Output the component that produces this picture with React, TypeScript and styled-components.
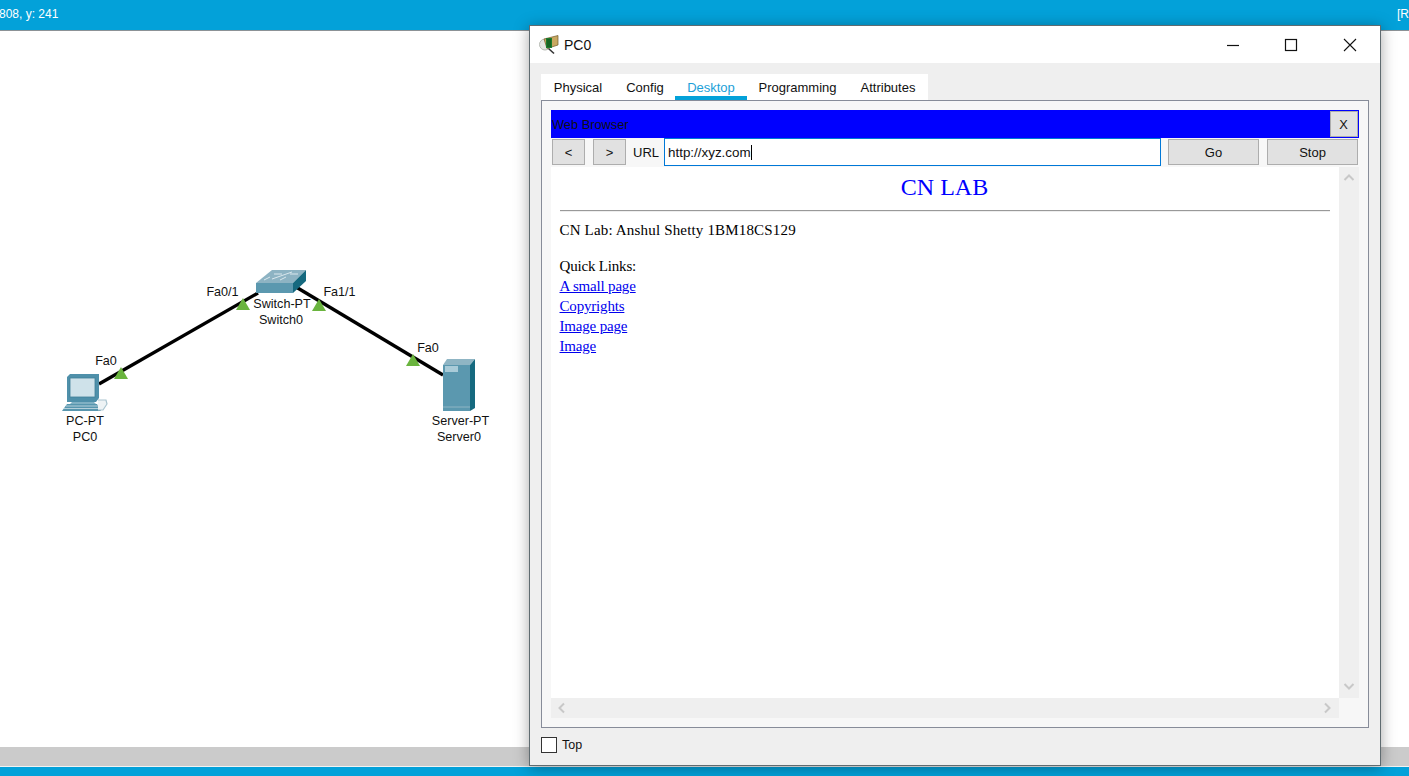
import React from "react";
import styled, { createGlobalStyle } from "styled-components";

const Global = createGlobalStyle`
  html, body { margin: 0; padding: 0; height: 100%; overflow: hidden; background: #fff; }
  #root { height: 100%; }
`;

const Page = styled.div`
  position: relative;
  width: 1409px;
  height: 776px;
  display: flex;
  flex-direction: column;
  overflow: hidden;
  font-family: "Liberation Sans", Arial, sans-serif;
  font-size: 12px;
  color: #111;
`;

const TopBar = styled.div`
  height: 30px;
  flex: none;
  display: flex;
  justify-content: space-between;
  align-items: flex-start;
  padding-top: 7px;
  box-sizing: border-box;
  background: #03a1d9;
  color: #fff;
  font-size: 12px;
  line-height: 14px;
  white-space: nowrap;
`;

const TopCoords = styled.span`
  margin-left: -1px;
`;

const TopRule = styled.div`
  height: 1px;
  flex: none;
  background: #8c9296;
`;

const Canvas = styled.div`
  position: relative;
  flex: 1;
  background: #fff;
`;

const Wires = styled.svg`
  position: absolute;
  left: 0;
  top: -31px;
  width: 520px;
  height: 500px;
`;

const NodeLabel = styled.span<{ $x: number; $y: number }>`
  position: absolute;
  left: ${(p) => p.$x}px;
  top: ${(p) => p.$y - 31}px;
  transform: translateX(-50%);
  line-height: 16px;
  font-size: 12.6px;
  white-space: nowrap;
  color: #111;
`;

const BottomScroll = styled.div`
  height: 19px;
  flex: none;
  background: #cbcbcb;
`;

const BottomRule = styled.div`
  height: 1px;
  flex: none;
  background: #f2f2f2;
`;

const BottomBar = styled.div`
  height: 9px;
  flex: none;
  background: #03a1d9;
`;

const Win = styled.div`
  position: absolute;
  left: 529px;
  top: 25px;
  width: 852px;
  height: 741px;
  box-sizing: border-box;
  border: 1px solid #5f6b70;
  background: #efefef;
  display: flex;
  flex-direction: column;
  box-shadow: 0 2px 14px rgba(0, 0, 0, 0.35);
`;

const TitleBar = styled.div`
  height: 37px;
  flex: none;
  background: #fff;
  display: flex;
  align-items: center;
  padding: 0 1px 0 9px;
  font-size: 14px;
  color: #111;
`;

const TitleText = styled.span`
  margin-left: 4px;
  flex: 1;
`;

const WinControl = styled.div`
  width: 58.5px;
  height: 37px;
  display: flex;
  align-items: center;
  justify-content: center;
`;

const Body = styled.div`
  flex: 1;
  display: flex;
  flex-direction: column;
  padding: 11px 11px 0 11px;
  min-height: 0;
`;

const Tabs = styled.div`
  align-self: flex-start;
  display: flex;
  height: 26px;
  background: #fff;
  box-sizing: border-box;
`;

const Tab = styled.div<{ $active?: boolean; $w: number }>`
  width: ${(p) => p.$w}px;
  box-sizing: border-box;
  text-align: center;
  font-size: 13px;
  line-height: 27px;
  height: 26px;
  color: ${(p) => (p.$active ? "#1c9fd8" : "#111")};
  border-bottom: ${(p) => (p.$active ? "4px solid #03a1d9" : "0")};
`;

const Panel = styled.div`
  height: 628px;
  flex: none;
  box-sizing: border-box;
  border: 1px solid #878c99;
  background: #f7f7f7;
  padding: 9px;
  display: flex;
  flex-direction: column;
`;

const AppHeader = styled.div`
  height: 28px;
  flex: none;
  box-sizing: border-box;
  background: #0000ff;
  border: 1px solid #0000ff;
  display: flex;
  align-items: center;
  justify-content: space-between;
  color: #111;
  font-size: 12.8px;
`;

const CloseBtn = styled.div`
  width: 28px;
  height: 26px;
  box-sizing: border-box;
  padding-right: 1px;
  background: #e1e1e1;
  border: 1px solid #adadad;
  display: flex;
  align-items: center;
  justify-content: center;
`;

const NavRow = styled.div`
  height: 29px;
  flex: none;
  box-sizing: border-box;
  display: flex;
  align-items: center;
  padding: 0 0 1px 1px;
`;

const NavBtn = styled.div<{ $w: number; $ml: number }>`
  width: ${(p) => p.$w}px;
  margin-left: ${(p) => p.$ml}px;
  height: 26px;
  box-sizing: border-box;
  flex: none;
  background: #e1e1e1;
  border: 1px solid #adadad;
  display: flex;
  align-items: center;
  justify-content: center;
  font-size: 13px;
`;

const UrlLabel = styled.span`
  margin-left: 7px;
  font-size: 13px;
  width: 31px;
  flex: none;
`;

const UrlBox = styled.div`
  width: 497px;
  height: 28px;
  flex: none;
  box-sizing: border-box;
  background: #fff;
  border: 1px solid #0078d7;
  padding-left: 3px;
  display: flex;
  align-items: center;
  font-size: 13.4px;
`;

const Caret = styled.span`
  display: inline-block;
  width: 1px;
  height: 15px;
  background: #000;
`;

const ViewRow = styled.div`
  flex: 1;
  display: grid;
  grid-template-columns: 788px 20px;
  grid-template-rows: 531px 20px;
  min-height: 0;
`;

const Doc = styled.div`
  background: #fff;
  font-family: "Liberation Serif", "Times New Roman", serif;
  font-size: 15px;
  line-height: 20px;
  color: #000;
  padding: 0 9px;
`;

const DocTitle = styled.div`
  text-align: center;
  font-size: 24px;
  line-height: 28px;
  color: #0000ff;
  padding: 6px 1px 0 0;
`;

const Rule = styled.hr`
  margin: 9px 0 0;
  border: 0;
  height: 1px;
  background: #999;
  box-shadow: 0 1px 0 #eee;
`;

const Para = styled.div`
  margin: 9px 0 0 -0.5px;
  letter-spacing: 0.17px;
`;

const LinkBlock = styled.div`
  margin: 16px 0 0 -0.5px;
  letter-spacing: -0.18px;
`;

const DocLink = styled.a`
  display: block;
  width: fit-content;
  color: #0000ee;
  text-decoration: underline;
`;

const VScroll = styled.div`
  background: #efefef;
  display: flex;
  flex-direction: column;
  justify-content: space-between;
  align-items: center;
  padding: 5px 0 6px;
  box-sizing: border-box;
`;

const HScroll = styled.div`
  background: #efefef;
  display: flex;
  justify-content: space-between;
  align-items: center;
  padding: 0 6px 0 5px;
`;

const Corner = styled.div`
  background: #f7f7f7;
`;

const Footer = styled.div`
  flex: 1;
  display: flex;
  align-items: center;
  padding-bottom: 4px;
  font-size: 12.5px;
`;

const Check = styled.div`
  width: 16px;
  height: 16px;
  box-sizing: border-box;
  background: #fff;
  border: 1px solid #333;
  margin-right: 5px;
`;

const Chevron = ({ d }: { d: string }) => (
  <svg width="12" height="12" viewBox="0 0 12 12">
    <path d={d} fill="none" stroke="#c8c8c8" strokeWidth="2" />
  </svg>
);

const PcIcon = () => (
  <g>
    <path d="M70 374 L99 374 L99 398 L96 402 L67 402 L67 377 Z" fill="#4f90aa" />
    <rect x="70" y="378" width="25" height="19" fill="#cfe2ea" stroke="#3f7f98" strokeWidth="0.8" />
    <path d="M72 402 L94 402 L96 404 L70 404 Z" fill="#7fb0c3" />
    <path d="M67 404 L97 404 L101 411 L62 411 Z" fill="#5796ae" />
    <path d="M66 406 L98 406 M64 408.5 L100 408.5" stroke="#b5d0db" strokeWidth="1" />
    <path d="M98 400 L106 400 L107 404 L103 410 L98 410" fill="#eef3f5" stroke="#a9c4cf" strokeWidth="1.2" />
  </g>
);

const SwitchIcon = () => (
  <g>
    <path d="M256 283 L272 270 L306 270 L293 283 Z" fill="#8db3c3" />
    <path d="M264 280 L270 277 M280 280 L286 277 M274 274 L282 274 M290 274 L298 274 M272 279 L292 272" stroke="#d9e7ed" strokeWidth="1" />
    <path d="M256 283 L293 283 L293 293 L256 293 Z" fill="#5b98af" />
    <path d="M293 283 L306 270 L306 281 L293 293 Z" fill="#15697f" />
  </g>
);

const ServerIcon = () => (
  <g>
    <path d="M443 365 L447 359 L475 359 L470 365 Z" fill="#8fb5c4" />
    <rect x="443" y="365" width="27" height="46" fill="#5b98af" />
    <path d="M470 365 L475 359 L475 408 L470 411 Z" fill="#15697f" />
    <rect x="445" y="366" width="13" height="6" fill="#a9cbd8" />
    <path d="M443 407 L470 407" stroke="#8fb5c4" strokeWidth="1" />
  </g>
);

const WindowIcon = () => (
  <svg width="21" height="20" viewBox="0 0 21 20">
    <circle cx="6" cy="9.5" r="5.5" fill="#e4e6e2" stroke="#b5b9b2" />
    <path d="M9.5 13.5 L15 18.5" stroke="#333" strokeWidth="1.6" />
    <path d="M5 4 L19 0.5 L19 10 L8 13.5 Z" fill="#c9a861" stroke="#6f5a2a" strokeWidth="0.7" />
    <rect x="7" y="3" width="6" height="10" fill="#1d7a2c" />
    <path d="M8 5 H12 M8 7 H12 M8 9 H12 M8 11 H12" stroke="#0a3d13" strokeWidth="0.7" />
  </svg>
);

const Tri = ({ x, y }: { x: number; y: number }) => (
  <path d={`M${x} ${y - 7} L${x + 7} ${y + 5} L${x - 7} ${y + 5} Z`} fill="#6ab43e" />
);

const links = ["A small page", "Copyrights", "Image page", "Image"];
const tabs: [string, number][] = [
  ["Physical", 74],
  ["Config", 60],
  ["Desktop", 72],
  ["Programming", 101],
  ["Attributes", 80],
];

export default function App() {
  return (
    <Page>
      <Global />
      <TopBar>
        <TopCoords>808, y: 241</TopCoords>
        <span>[R</span>
      </TopBar>
      <TopRule />
      <Canvas>
        <Wires viewBox="0 0 520 500">
          <path d="M99 384 L258 293" stroke="#000" strokeWidth="3.4" />
          <path d="M296 287 L443 375" stroke="#000" strokeWidth="3.4" />
          <Tri x={121} y={374} />
          <Tri x={243} y={305} />
          <Tri x={319} y={306} />
          <Tri x={413} y={361} />
          <PcIcon />
          <SwitchIcon />
          <ServerIcon />
        </Wires>
        <NodeLabel $x={106} $y={353}>Fa0</NodeLabel>
        <NodeLabel $x={222.5} $y={284}>Fa0/1</NodeLabel>
        <NodeLabel $x={339.5} $y={284}>Fa1/1</NodeLabel>
        <NodeLabel $x={428} $y={340}>Fa0</NodeLabel>
        <NodeLabel $x={282} $y={296}>Switch-PT</NodeLabel>
        <NodeLabel $x={281} $y={312}>Switch0</NodeLabel>
        <NodeLabel $x={85} $y={413}>PC-PT</NodeLabel>
        <NodeLabel $x={85} $y={429}>PC0</NodeLabel>
        <NodeLabel $x={460.5} $y={413}>Server-PT</NodeLabel>
        <NodeLabel $x={459} $y={429}>Server0</NodeLabel>
      </Canvas>
      <BottomScroll />
      <BottomRule />
      <BottomBar />
      <Win>
        <TitleBar>
          <WindowIcon />
          <TitleText>PC0</TitleText>
          <WinControl>
            <svg width="14" height="14" viewBox="0 0 14 14"><path d="M1 7.5 H13" stroke="#111" strokeWidth="1.2" /></svg>
          </WinControl>
          <WinControl>
            <svg width="14" height="14" viewBox="0 0 14 14"><rect x="1.5" y="1.5" width="11" height="11" fill="none" stroke="#111" strokeWidth="1.2" /></svg>
          </WinControl>
          <WinControl>
            <svg width="14" height="14" viewBox="0 0 14 14"><path d="M1 1 L13 13 M13 1 L1 13" stroke="#111" strokeWidth="1.1" /></svg>
          </WinControl>
        </TitleBar>
        <Body>
          <Tabs>
            {tabs.map(([t, w]) => (
              <Tab key={t} $w={w} $active={t === "Desktop"}>{t}</Tab>
            ))}
          </Tabs>
          <Panel>
            <AppHeader>
              <span>Web Browser</span>
              <CloseBtn>X</CloseBtn>
            </AppHeader>
            <NavRow>
              <NavBtn $w={33} $ml={0}>&lt;</NavBtn>
              <NavBtn $w={33} $ml={8}>&gt;</NavBtn>
              <UrlLabel>URL</UrlLabel>
              <UrlBox>http://xyz.com<Caret /></UrlBox>
              <NavBtn $w={91} $ml={7}>Go</NavBtn>
              <NavBtn $w={91} $ml={8}>Stop</NavBtn>
            </NavRow>
            <ViewRow>
              <Doc>
                <DocTitle>CN LAB</DocTitle>
                <Rule />
                <Para>CN Lab: Anshul Shetty 1BM18CS129</Para>
                <LinkBlock>
                  Quick Links:
                  {links.map((l) => (
                    <DocLink key={l} href="#">{l}</DocLink>
                  ))}
                </LinkBlock>
              </Doc>
              <VScroll>
                <Chevron d="M1.5 8 L6 3.5 L10.5 8" />
                <Chevron d="M1.5 4 L6 8.5 L10.5 4" />
              </VScroll>
              <HScroll>
                <Chevron d="M8 1.5 L3.5 6 L8 10.5" />
                <Chevron d="M4 1.5 L8.5 6 L4 10.5" />
              </HScroll>
              <Corner />
            </ViewRow>
          </Panel>
          <Footer>
            <Check />
            Top
          </Footer>
        </Body>
      </Win>
    </Page>
  );
}
